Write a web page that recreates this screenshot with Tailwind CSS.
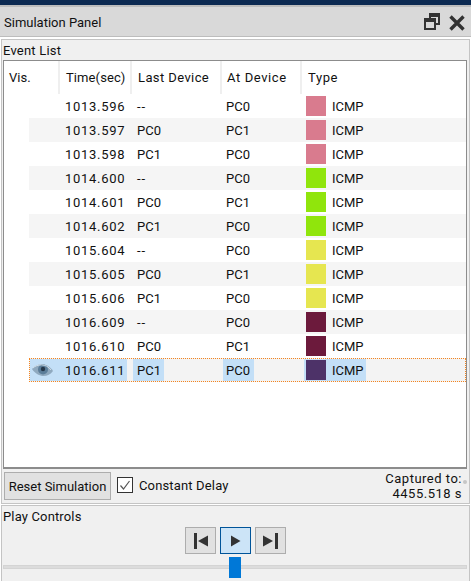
<!DOCTYPE html>
<html><head><meta charset="utf-8"><script src="https://cdn.jsdelivr.net/npm/@tailwindcss/browser@4"></script></head>
<body class="m-0 bg-white">
<div class="w-[471px] h-[581px] overflow-hidden flex flex-col bg-white font-['Roboto',sans-serif] text-[13px] leading-[16px] text-[#111]">
  <div class="h-[5px] bg-[#0c2a52] shrink-0"></div>
  <div class="h-[32px] shrink-0 bg-[#d9d9d9] border-t-2 border-b border-[#bdbdbd] flex items-center pl-[4px] pr-[6px] justify-between">
    <span class="pt-[2px]">Simulation Panel</span>
    <div class="flex items-center gap-[9px]">
      <svg width="16" height="17" viewBox="0 0 16 17" fill="none" stroke="#333" stroke-width="2"><path d="M6 5V1h9v10h-4"/><rect x="1" y="6" width="10" height="10"/><path d="M1 7.500h10M6 2.500h9" stroke-width="3"/></svg>
      <svg width="16" height="16" viewBox="0 0 16 16" stroke="#333" stroke-width="3.400" class="mt-[2px]"><path d="M1.500 1.500l13 13M14.500 1.500l-13 13"/></svg>
    </div>
  </div>
  <div class="h-[2px] shrink-0"></div>
  <div class="h-[465px] shrink-0 mx-[1px] bg-[#f0f0f0] border border-[#c4c4c4] flex flex-col">
    <div class="h-[20px] shrink-0 pl-[1px] pt-[3px] tracking-[0.2px]">Event List</div>
    <div class="h-[409px] shrink-0 ml-[1px] w-[464px] border border-[#8c8c8c] border-b-2 bg-white">
      <div class="h-[33px] flex text-[#111]">
        <div class="w-[56px] pl-[5px] pt-[9px] border-r-2 border-[#efefef]">Vis.</div>
        <div class="w-[72px] pl-[6px] pt-[9px] border-r-2 border-[#efefef] tracking-[0.1px]">Time(sec)</div>
        <div class="w-[90px] pl-[6px] pt-[9px] border-r-2 border-[#efefef] tracking-[0.4px]">Last Device</div>
        <div class="w-[80px] pl-[5px] pt-[9px] border-r-2 border-[#efefef] tracking-[0.6px]">At Device</div>
        <div class="flex-1 pl-[6px] pt-[9px] tracking-[0.6px]">Type</div>
      </div>
      <div class="flex flex-col">
        <div class="h-[24px] flex items-center ml-[25px]"><span class="w-[36px]"></span><span class="w-[72px] pt-[2px] tracking-[0.7px]">1013.596</span><span class="w-[89px] pt-[2px] tracking-[1px]">--</span><span class="w-[80px] pt-[2px]">PC0</span><span class="w-[20px] h-[20px] bg-[#d97b8e]"></span><span class="ml-[6px] pt-[2px]">ICMP</span></div>
        <div class="h-[24px] flex items-center ml-[25px] bg-[#f5f5f5]"><span class="w-[36px]"></span><span class="w-[72px] pt-[2px] tracking-[0.7px]">1013.597</span><span class="w-[89px] pt-[2px]">PC0</span><span class="w-[80px] pt-[2px]">PC1</span><span class="w-[20px] h-[20px] bg-[#d97b8e]"></span><span class="ml-[6px] pt-[2px]">ICMP</span></div>
        <div class="h-[24px] flex items-center ml-[25px]"><span class="w-[36px]"></span><span class="w-[72px] pt-[2px] tracking-[0.7px]">1013.598</span><span class="w-[89px] pt-[2px]">PC1</span><span class="w-[80px] pt-[2px]">PC0</span><span class="w-[20px] h-[20px] bg-[#d97b8e]"></span><span class="ml-[6px] pt-[2px]">ICMP</span></div>
        <div class="h-[24px] flex items-center ml-[25px] bg-[#f5f5f5]"><span class="w-[36px]"></span><span class="w-[72px] pt-[2px] tracking-[0.7px]">1014.600</span><span class="w-[89px] pt-[2px] tracking-[1px]">--</span><span class="w-[80px] pt-[2px]">PC0</span><span class="w-[20px] h-[20px] bg-[#90e50c]"></span><span class="ml-[6px] pt-[2px]">ICMP</span></div>
        <div class="h-[24px] flex items-center ml-[25px]"><span class="w-[36px]"></span><span class="w-[72px] pt-[2px] tracking-[0.7px]">1014.601</span><span class="w-[89px] pt-[2px]">PC0</span><span class="w-[80px] pt-[2px]">PC1</span><span class="w-[20px] h-[20px] bg-[#90e50c]"></span><span class="ml-[6px] pt-[2px]">ICMP</span></div>
        <div class="h-[24px] flex items-center ml-[25px] bg-[#f5f5f5]"><span class="w-[36px]"></span><span class="w-[72px] pt-[2px] tracking-[0.7px]">1014.602</span><span class="w-[89px] pt-[2px]">PC1</span><span class="w-[80px] pt-[2px]">PC0</span><span class="w-[20px] h-[20px] bg-[#90e50c]"></span><span class="ml-[6px] pt-[2px]">ICMP</span></div>
        <div class="h-[24px] flex items-center ml-[25px]"><span class="w-[36px]"></span><span class="w-[72px] pt-[2px] tracking-[0.7px]">1015.604</span><span class="w-[89px] pt-[2px] tracking-[1px]">--</span><span class="w-[80px] pt-[2px]">PC0</span><span class="w-[20px] h-[20px] bg-[#e6e650]"></span><span class="ml-[6px] pt-[2px]">ICMP</span></div>
        <div class="h-[24px] flex items-center ml-[25px] bg-[#f5f5f5]"><span class="w-[36px]"></span><span class="w-[72px] pt-[2px] tracking-[0.7px]">1015.605</span><span class="w-[89px] pt-[2px]">PC0</span><span class="w-[80px] pt-[2px]">PC1</span><span class="w-[20px] h-[20px] bg-[#e6e650]"></span><span class="ml-[6px] pt-[2px]">ICMP</span></div>
        <div class="h-[24px] flex items-center ml-[25px]"><span class="w-[36px]"></span><span class="w-[72px] pt-[2px] tracking-[0.7px]">1015.606</span><span class="w-[89px] pt-[2px]">PC1</span><span class="w-[80px] pt-[2px]">PC0</span><span class="w-[20px] h-[20px] bg-[#e6e650]"></span><span class="ml-[6px] pt-[2px]">ICMP</span></div>
        <div class="h-[24px] flex items-center ml-[25px] bg-[#f5f5f5]"><span class="w-[36px]"></span><span class="w-[72px] pt-[2px] tracking-[0.7px]">1016.609</span><span class="w-[89px] pt-[2px] tracking-[1px]">--</span><span class="w-[80px] pt-[2px]">PC0</span><span class="w-[20px] h-[20px] bg-[#6c1a3c]"></span><span class="ml-[6px] pt-[2px]">ICMP</span></div>
        <div class="h-[24px] flex items-center ml-[25px]"><span class="w-[36px]"></span><span class="w-[72px] pt-[2px] tracking-[0.7px]">1016.610</span><span class="w-[89px] pt-[2px]">PC0</span><span class="w-[80px] pt-[2px]">PC1</span><span class="w-[20px] h-[20px] bg-[#6c1a3c]"></span><span class="ml-[6px] pt-[2px]">ICMP</span></div>
        <div class="h-[24px] flex items-stretch ml-[25px] bg-[#f3f3f3] border border-dotted border-[#f5851f]">
          <span class="w-[97px] shrink-0 bg-[#c3dff7] flex items-center tracking-[0.7px]"><svg width="21" height="14" viewBox="0 0 21 14" class="ml-[2px] mr-[12px] shrink-0"><path d="M0 6C5 0 15-1 21 8c-5 7-15 7-21-2z" fill="#8fa9bf"/><circle cx="11" cy="6.500" r="5" fill="#5b7d99"/><circle cx="11" cy="6" r="2.200" fill="#26384a"/><path d="M1 5c4-4 13-5 18 2" stroke="#d2dfe9" fill="none"/></svg><span class="pt-[2px]">1016.611</span></span>
          <span class="w-[6px] shrink-0"></span>
          <span class="w-[31px] shrink-0 bg-[#c3dff7] flex items-center pl-[4px] pt-[2px]">PC1</span>
          <span class="w-[59px] shrink-0"></span>
          <span class="w-[31px] shrink-0 bg-[#c3dff7] flex items-center pl-[3px] pt-[2px]">PC0</span>
          <span class="w-[50px] shrink-0"></span>
          <span class="bg-[#c3dff7] flex items-center pl-[2px] w-[62px] shrink-0"><span class="w-[20px] h-[20px] bg-[#4d3268]"></span><span class="ml-[6px] pt-[2px]">ICMP</span></span>
        </div>
      </div>
    </div>
    <div class="h-[34px] shrink-0 flex items-start pt-[3px] pl-[2px] pr-[3px] relative">
      <button class="w-[107px] h-[28px] pt-[2px] bg-[#e1e1e1] border border-[#adadad] text-[13px]">Reset Simulation</button>
      <span class="ml-[6px] w-[16px] h-[16px] mt-[5px] bg-white border border-[#333] flex items-center justify-center"><svg width="12" height="12" viewBox="0 0 12 12" fill="none" stroke="#555" stroke-width="1.200"><path d="M1.500 6.500l3 3.500 6-8"/></svg></span>
      <span class="ml-[6px] mt-[6px] tracking-[0.15px]">Constant Delay</span>
      <div class="ml-auto text-right mr-[4px] -mt-[1px] leading-[15px] tracking-[0.5px]">Captured to:<br>4455.518 s</div>
      <span class="absolute left-[461px] top-[11px] w-[4px] h-[4px] bg-[#c6c6c6] rounded-full"></span>
    </div>
  </div>
  <div class="h-[1px] shrink-0"></div>
  <div class="flex-1 min-h-0 mx-[1px] bg-[#f0f0f0] border-t border-x border-[#c4c4c4] relative">
    <div class="pl-[1px] pt-[3px] tracking-[0.15px]">Play Controls</div>
    <div class="flex justify-center gap-[4px] mt-[2px]">
      <span class="w-[31px] h-[27px] bg-[#e1e1e1] border border-[#adadad] flex items-center justify-center"><svg width="14" height="16" viewBox="0 0 14 16" fill="#333"><rect x="0" y="0" width="3" height="16"/><path d="M14 2.500V13.500L4 8z"/></svg></span>
      <span class="w-[31px] h-[27px] bg-[#cce4f7] border border-[#005499] flex items-center justify-center"><svg width="10" height="12" viewBox="0 0 10 12" fill="#333"><path d="M0 .5V11.500L9.500 6z"/></svg></span>
      <span class="w-[31px] h-[27px] bg-[#e1e1e1] border border-[#adadad] flex items-center justify-center"><svg width="15" height="16" viewBox="0 0 15 16" fill="#333"><path d="M0 2.500V13.500L10 8z"/><rect x="12" y="0" width="3" height="16"/></svg></span>
    </div>
    <div class="h-[4px] ml-[1px] mr-[2px] mt-[11px] bg-[#dcdcdc] border border-[#d4d4d4]"></div>
    <div class="absolute left-[227px] top-[51px] w-[12px] h-[21px] bg-[#0078d7]"></div>
  </div>
</div>
</body></html>
